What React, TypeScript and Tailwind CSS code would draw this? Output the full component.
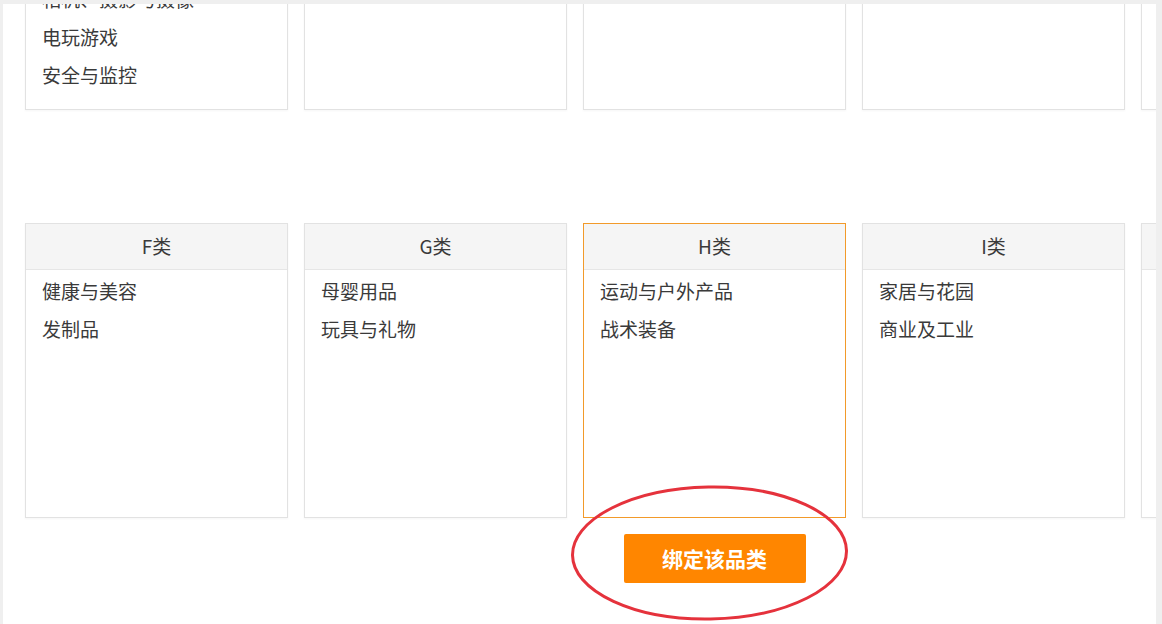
import React from 'react';
import clsx from 'clsx';

type Category = { id: string; title: string; items: string[] };

const topRow: Category[] = [
  { id: 't1', title: '', items: ['相机、摄影与摄像', '电玩游戏', '安全与监控'] },
  { id: 't2', title: '', items: [] },
  { id: 't3', title: '', items: [] },
  { id: 't4', title: '', items: [] },
  { id: 't5', title: '', items: [] },
];

const bottomRow: Category[] = [
  { id: 'f', title: 'F类', items: ['健康与美容', '发制品'] },
  { id: 'g', title: 'G类', items: ['母婴用品', '玩具与礼物'] },
  { id: 'h', title: 'H类', items: ['运动与户外产品', '战术装备'] },
  { id: 'i', title: 'I类', items: ['家居与花园', '商业及工业'] },
  { id: 'j', title: '', items: [] },
];

const SELECTED = 'h';

function TopCard({ cat }: { cat: Category }) {
  return (
    <div className="h-[200px] w-[263px] shrink-0 border border-solid border-[#e2e2e2] bg-white shadow-[0_1px_2px_rgba(0,0,0,0.04)]">
      <ul className="flex h-full flex-col justify-end px-[16px] pb-[15px] leading-[38px]">
        {cat.items.map((it) => (
          <li key={it} className="whitespace-nowrap">
            {it}
          </li>
        ))}
      </ul>
    </div>
  );
}

function CategoryCard({ cat }: { cat: Category }) {
  const active = cat.id === SELECTED;
  return (
    <div
      className={clsx(
        'h-[295px] w-[263px] shrink-0 border border-solid bg-white',
        active ? 'border-[#f29a2a]' : 'border-[#e2e2e2] shadow-[0_1px_2px_rgba(0,0,0,0.04)]',
      )}
    >
      <div className="flex h-[46px] items-center justify-center border-b border-solid border-[#e6e6e6] bg-[#f5f5f5]">
        {cat.title}
      </div>
      <ul className="px-[16px] pt-[2px] leading-[38px]">
        {cat.items.map((it) => (
          <li key={it}>{it}</li>
        ))}
      </ul>
    </div>
  );
}

export default function App() {
  return (
    <div
      className="h-[624px] w-[1162px] overflow-hidden bg-[#efefef] pl-[3px] pr-[6px] pt-[4px] text-[19px] text-[#3a3a3a]"
      style={{ fontFamily: '"Microsoft YaHei", "Noto Sans CJK SC", sans-serif' }}
    >
      <div className="relative h-[620px] overflow-hidden bg-white pl-[22px]">
        {/* top row, scrolled partly out of view */}
        <div className="-mt-[94px] flex gap-[16px]">
          {topRow.map((c) => (
            <TopCard key={c.id} cat={c} />
          ))}
        </div>

        <div className="mt-[113px] flex gap-[16px]">
          {bottomRow.map((c) => (
            <CategoryCard key={c.id} cat={c} />
          ))}
        </div>

        <div className="ml-[558px] mt-[16px] flex w-[263px] justify-center">
          <button className="flex h-[49px] w-[182px] items-center justify-center rounded-[2px] bg-[#ff8600] text-[21px] font-bold text-white">
            绑定该品类
          </button>
        </div>

        {/* hand-drawn annotation circle */}
        <svg
          className="pointer-events-none absolute left-[564px] top-[477px]"
          width="290"
          height="145"
          viewBox="0 0 290 145"
        >
          <ellipse
            cx="142.5"
            cy="72"
            rx="137"
            ry="66"
            fill="none"
            stroke="#e5323c"
            strokeWidth="3"
            transform="rotate(-1 142.5 72)"
          />
        </svg>
      </div>
    </div>
  );
}
